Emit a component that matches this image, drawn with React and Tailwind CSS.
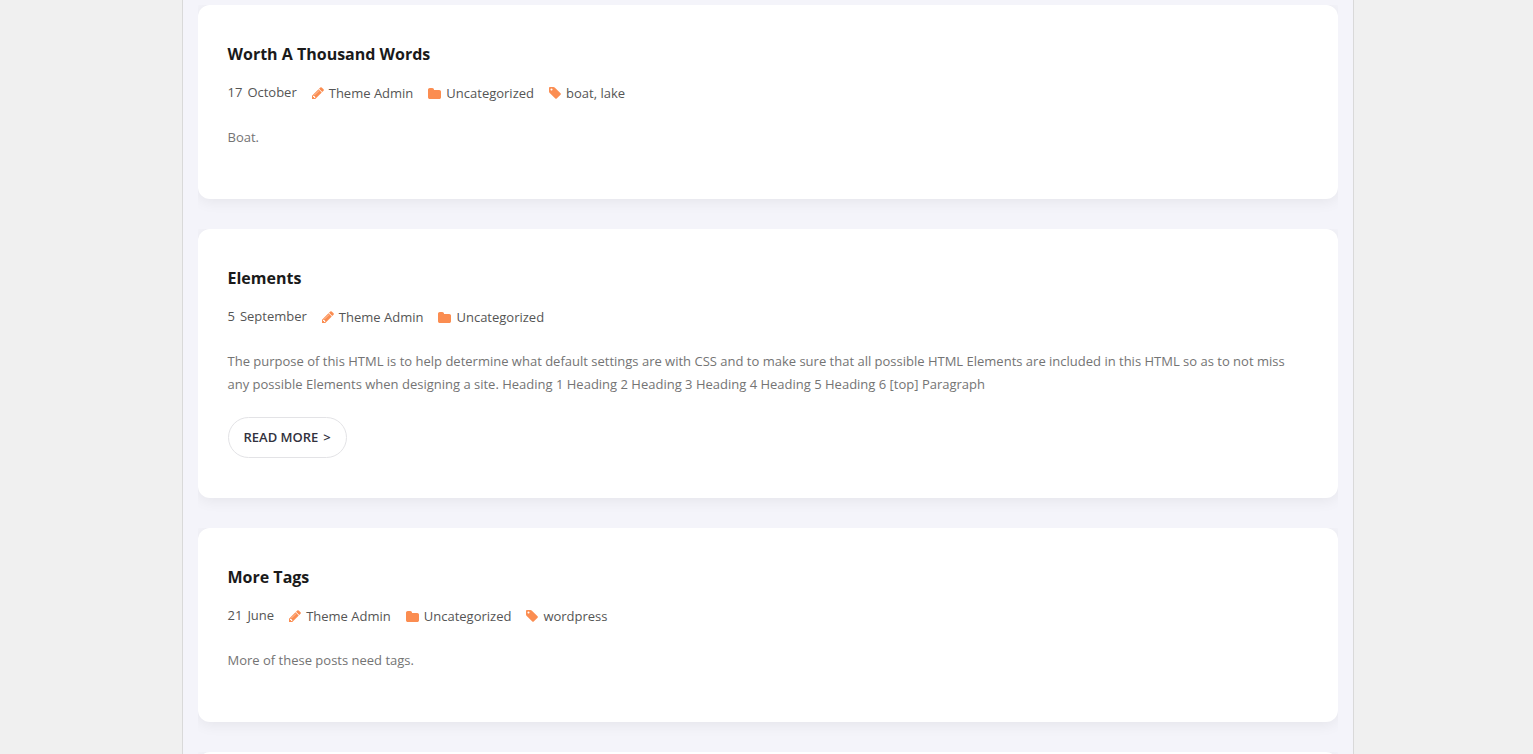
const posts = [
  {
    id: 1,
    title: "Worth A Thousand Words",
    day: "17",
    month: "October",
    author: "Theme Admin",
    category: "Uncategorized",
    tags: ["boat", "lake"],
    excerpt: "Boat.",
  },
  {
    id: 2,
    title: "Elements",
    day: "5",
    month: "September",
    author: "Theme Admin",
    category: "Uncategorized",
    tags: [],
    excerpt:
      "The purpose of this HTML is to help determine what default settings are with CSS and to make sure that all possible HTML Elements are included in this HTML so as to not miss any possible Elements when designing a site. Heading 1 Heading 2 Heading 3 Heading 4 Heading 5 Heading 6 [top] Paragraph",
    readMore: true,
  },
  {
    id: 3,
    title: "More Tags",
    day: "21",
    month: "June",
    author: "Theme Admin",
    category: "Uncategorized",
    tags: ["wordpress"],
    excerpt: "More of these posts need tags.",
  },
];

const PencilIcon = () => (
  <svg viewBox="128 128 1536 1536" className="size-3 fill-[#fb8d51]" aria-hidden="true">
    <path d="M491 1536l91-91-235-235-91 91v107h128v128h107zm523-928q0-22-22-22-10 0-17 7l-542 542q-7 7-7 17 0 22 22 22 10 0 17-7l542-542q7-7 7-17zm-54-192l416 416-832 832h-416v-416zm683 96q0 53-37 90l-166 166-416-416 166-165q36-38 90-38 53 0 91 38l235 234q37 39 37 91z" />
  </svg>
);

const FolderIcon = () => (
  <svg viewBox="64 128 1664 1408" className="h-[11px] w-[13px] fill-[#fb8d51]" aria-hidden="true">
    <path d="M1728 608v704q0 92-66 158t-158 66h-1216q-92 0-158-66t-66-158v-960q0-92 66-158t158-66h320q92 0 158 66t66 158v32h672q92 0 158 66t66 158z" />
  </svg>
);

const TagIcon = () => (
  <svg viewBox="128 128 1536 1536" className="size-3 fill-[#fb8d51]" aria-hidden="true">
    <path d="M576 448q0-53-37.5-90.5t-90.5-37.5-90.5 37.5-37.5 90.5 37.5 90.5 90.5 37.5 90.5-37.5 37.5-90.5zm1067 576q0 53-37 90l-491 492q-39 37-91 37-53 0-90-37l-715-716q-38-37-64.5-101t-26.5-117v-416q0-52 38-90t90-38h416q53 0 117 26.5t102 64.5l715 714q37 39 37 91z" />
  </svg>
);

const PostMeta = ({ post }) => (
  <div className="flex items-center text-[13px] leading-6 text-[#555]">
    <a href="#" className="flex gap-[5px] pb-0.5">
      <span>{post.day}</span>
      <span>{post.month}</span>
    </a>
    <span className="ml-[15px] flex items-center gap-[5px]">
      <PencilIcon />
      <a href="#">{post.author}</a>
    </span>
    <span className="ml-[15px] flex items-center gap-[5px]">
      <FolderIcon />
      <a href="#">{post.category}</a>
    </span>
    {post.tags.length > 0 && (
      <span className="ml-[15px] flex items-center gap-[5px]">
        <TagIcon />
        <span>
          {post.tags.map((tag, index) => (
            <span key={tag}>
              {index > 0 && ", "}
              <a href="#">{tag}</a>
            </span>
          ))}
        </span>
      </span>
    )}
  </div>
);

// The wrapper clips the card's shadow on the top and the sides
const PostCard = ({ post }) => (
  <article className="overflow-hidden pb-[30px]">
    <div className="rounded-xl bg-white px-[30px] pt-9 pb-10 shadow-[0_2px_15px_rgba(0,0,0,0.07)]">
      <h2 className="text-base leading-[26px] font-bold text-[#1a1a1a]">
        <a href="#">{post.title}</a>
      </h2>
      <div className="mt-[13px]">
        <PostMeta post={post} />
      </div>
      <p className="mt-5 text-[13px] leading-[23px] text-[#747474]">{post.excerpt}</p>
      {post.readMore ? (
        <a
          href="#"
          className="mt-[21px] flex h-[41px] w-fit items-center gap-[5px] rounded-full border border-[#e3e3e6] px-[15px] text-[13px] font-semibold text-[#32323e]"
        >
          <span>READ MORE</span>
          <span>&gt;</span>
        </a>
      ) : (
        <div className="h-2.5" />
      )}
    </div>
  </article>
);

const App = () => {
  return (
    <div className="min-h-screen bg-[#f0f0f0] pl-0.5 font-['Open_Sans',sans-serif]">
      <main className="mx-auto min-h-screen max-w-[1172px] border-x border-[#d9d9d9] bg-[#f4f4fa] px-[15px] pt-[5px]">
        {posts.map((post) => (
          <PostCard key={post.id} post={post} />
        ))}
        {/* Top edge of the next post */}
        <div className="h-0.5 overflow-hidden">
          <div className="h-6 rounded-xl bg-white shadow-[0_2px_15px_rgba(0,0,0,0.07)]" />
        </div>
      </main>
    </div>
  );
};

export default App;
